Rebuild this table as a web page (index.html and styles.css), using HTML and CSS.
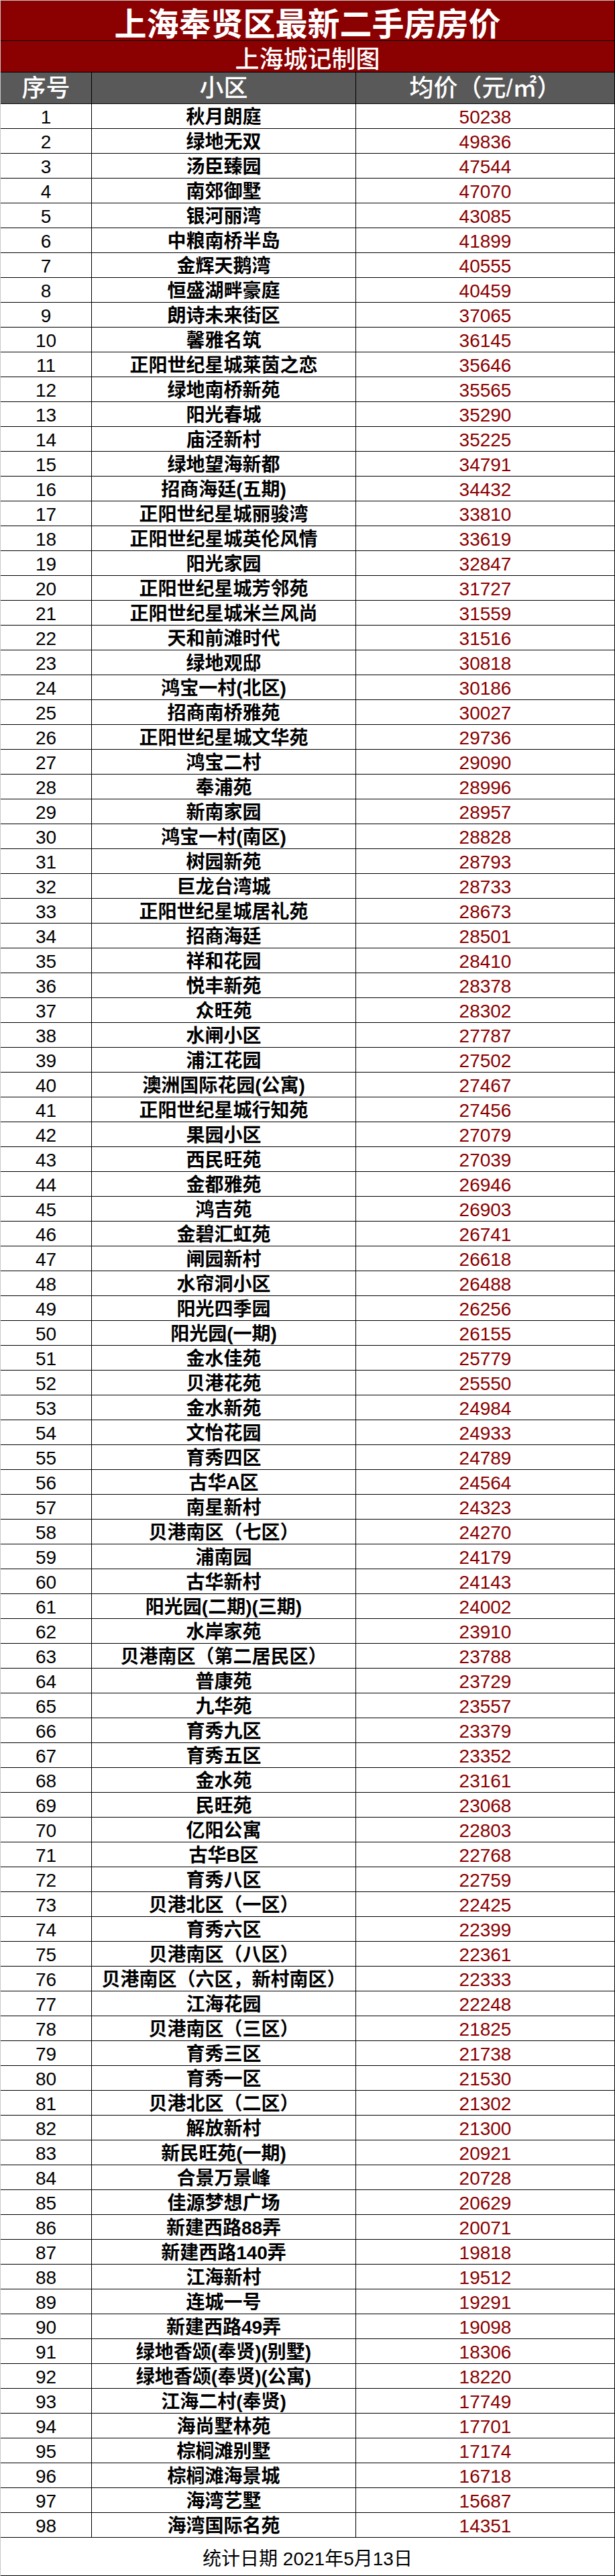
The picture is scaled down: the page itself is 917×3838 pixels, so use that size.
FILE: index.html
```html
<!DOCTYPE html>
<html lang="zh-CN">
<head>
<meta charset="utf-8">
<title>上海奉贤区最新二手房房价</title>
<link rel="stylesheet" href="styles.css">
</head>
<body>
<div class="sheet">
  <div class="title">上海奉贤区最新二手房房价</div>
  <div class="subtitle">上海城记制图</div>
  <div class="row head"><div class="c num">序号</div><div class="c name">小区</div><div class="c price">均价（元/㎡）</div></div>
  <div class="row"><div class="c num">1</div><div class="c name">秋月朗庭</div><div class="c price">50238</div></div>
  <div class="row"><div class="c num">2</div><div class="c name">绿地无双</div><div class="c price">49836</div></div>
  <div class="row"><div class="c num">3</div><div class="c name">汤臣臻园</div><div class="c price">47544</div></div>
  <div class="row"><div class="c num">4</div><div class="c name">南郊御墅</div><div class="c price">47070</div></div>
  <div class="row"><div class="c num">5</div><div class="c name">银河丽湾</div><div class="c price">43085</div></div>
  <div class="row"><div class="c num">6</div><div class="c name">中粮南桥半岛</div><div class="c price">41899</div></div>
  <div class="row"><div class="c num">7</div><div class="c name">金辉天鹅湾</div><div class="c price">40555</div></div>
  <div class="row"><div class="c num">8</div><div class="c name">恒盛湖畔豪庭</div><div class="c price">40459</div></div>
  <div class="row"><div class="c num">9</div><div class="c name">朗诗未来街区</div><div class="c price">37065</div></div>
  <div class="row"><div class="c num">10</div><div class="c name">馨雅名筑</div><div class="c price">36145</div></div>
  <div class="row"><div class="c num">11</div><div class="c name">正阳世纪星城莱茵之恋</div><div class="c price">35646</div></div>
  <div class="row"><div class="c num">12</div><div class="c name">绿地南桥新苑</div><div class="c price">35565</div></div>
  <div class="row"><div class="c num">13</div><div class="c name">阳光春城</div><div class="c price">35290</div></div>
  <div class="row"><div class="c num">14</div><div class="c name">庙泾新村</div><div class="c price">35225</div></div>
  <div class="row"><div class="c num">15</div><div class="c name">绿地望海新都</div><div class="c price">34791</div></div>
  <div class="row"><div class="c num">16</div><div class="c name">招商海廷(五期)</div><div class="c price">34432</div></div>
  <div class="row"><div class="c num">17</div><div class="c name">正阳世纪星城丽骏湾</div><div class="c price">33810</div></div>
  <div class="row"><div class="c num">18</div><div class="c name">正阳世纪星城英伦风情</div><div class="c price">33619</div></div>
  <div class="row"><div class="c num">19</div><div class="c name">阳光家园</div><div class="c price">32847</div></div>
  <div class="row"><div class="c num">20</div><div class="c name">正阳世纪星城芳邻苑</div><div class="c price">31727</div></div>
  <div class="row"><div class="c num">21</div><div class="c name">正阳世纪星城米兰风尚</div><div class="c price">31559</div></div>
  <div class="row"><div class="c num">22</div><div class="c name">天和前滩时代</div><div class="c price">31516</div></div>
  <div class="row"><div class="c num">23</div><div class="c name">绿地观邸</div><div class="c price">30818</div></div>
  <div class="row"><div class="c num">24</div><div class="c name">鸿宝一村(北区)</div><div class="c price">30186</div></div>
  <div class="row"><div class="c num">25</div><div class="c name">招商南桥雅苑</div><div class="c price">30027</div></div>
  <div class="row"><div class="c num">26</div><div class="c name">正阳世纪星城文华苑</div><div class="c price">29736</div></div>
  <div class="row"><div class="c num">27</div><div class="c name">鸿宝二村</div><div class="c price">29090</div></div>
  <div class="row"><div class="c num">28</div><div class="c name">奉浦苑</div><div class="c price">28996</div></div>
  <div class="row"><div class="c num">29</div><div class="c name">新南家园</div><div class="c price">28957</div></div>
  <div class="row"><div class="c num">30</div><div class="c name">鸿宝一村(南区)</div><div class="c price">28828</div></div>
  <div class="row"><div class="c num">31</div><div class="c name">树园新苑</div><div class="c price">28793</div></div>
  <div class="row"><div class="c num">32</div><div class="c name">巨龙台湾城</div><div class="c price">28733</div></div>
  <div class="row"><div class="c num">33</div><div class="c name">正阳世纪星城居礼苑</div><div class="c price">28673</div></div>
  <div class="row"><div class="c num">34</div><div class="c name">招商海廷</div><div class="c price">28501</div></div>
  <div class="row"><div class="c num">35</div><div class="c name">祥和花园</div><div class="c price">28410</div></div>
  <div class="row"><div class="c num">36</div><div class="c name">悦丰新苑</div><div class="c price">28378</div></div>
  <div class="row"><div class="c num">37</div><div class="c name">众旺苑</div><div class="c price">28302</div></div>
  <div class="row"><div class="c num">38</div><div class="c name">水闸小区</div><div class="c price">27787</div></div>
  <div class="row"><div class="c num">39</div><div class="c name">浦江花园</div><div class="c price">27502</div></div>
  <div class="row"><div class="c num">40</div><div class="c name">澳洲国际花园(公寓)</div><div class="c price">27467</div></div>
  <div class="row"><div class="c num">41</div><div class="c name">正阳世纪星城行知苑</div><div class="c price">27456</div></div>
  <div class="row"><div class="c num">42</div><div class="c name">果园小区</div><div class="c price">27079</div></div>
  <div class="row"><div class="c num">43</div><div class="c name">西民旺苑</div><div class="c price">27039</div></div>
  <div class="row"><div class="c num">44</div><div class="c name">金都雅苑</div><div class="c price">26946</div></div>
  <div class="row"><div class="c num">45</div><div class="c name">鸿吉苑</div><div class="c price">26903</div></div>
  <div class="row"><div class="c num">46</div><div class="c name">金碧汇虹苑</div><div class="c price">26741</div></div>
  <div class="row"><div class="c num">47</div><div class="c name">闸园新村</div><div class="c price">26618</div></div>
  <div class="row"><div class="c num">48</div><div class="c name">水帘洞小区</div><div class="c price">26488</div></div>
  <div class="row"><div class="c num">49</div><div class="c name">阳光四季园</div><div class="c price">26256</div></div>
  <div class="row"><div class="c num">50</div><div class="c name">阳光园(一期)</div><div class="c price">26155</div></div>
  <div class="row"><div class="c num">51</div><div class="c name">金水佳苑</div><div class="c price">25779</div></div>
  <div class="row"><div class="c num">52</div><div class="c name">贝港花苑</div><div class="c price">25550</div></div>
  <div class="row"><div class="c num">53</div><div class="c name">金水新苑</div><div class="c price">24984</div></div>
  <div class="row"><div class="c num">54</div><div class="c name">文怡花园</div><div class="c price">24933</div></div>
  <div class="row"><div class="c num">55</div><div class="c name">育秀四区</div><div class="c price">24789</div></div>
  <div class="row"><div class="c num">56</div><div class="c name">古华A区</div><div class="c price">24564</div></div>
  <div class="row"><div class="c num">57</div><div class="c name">南星新村</div><div class="c price">24323</div></div>
  <div class="row"><div class="c num">58</div><div class="c name">贝港南区（七区）</div><div class="c price">24270</div></div>
  <div class="row"><div class="c num">59</div><div class="c name">浦南园</div><div class="c price">24179</div></div>
  <div class="row"><div class="c num">60</div><div class="c name">古华新村</div><div class="c price">24143</div></div>
  <div class="row"><div class="c num">61</div><div class="c name">阳光园(二期)(三期)</div><div class="c price">24002</div></div>
  <div class="row"><div class="c num">62</div><div class="c name">水岸家苑</div><div class="c price">23910</div></div>
  <div class="row"><div class="c num">63</div><div class="c name">贝港南区（第二居民区）</div><div class="c price">23788</div></div>
  <div class="row"><div class="c num">64</div><div class="c name">普康苑</div><div class="c price">23729</div></div>
  <div class="row"><div class="c num">65</div><div class="c name">九华苑</div><div class="c price">23557</div></div>
  <div class="row"><div class="c num">66</div><div class="c name">育秀九区</div><div class="c price">23379</div></div>
  <div class="row"><div class="c num">67</div><div class="c name">育秀五区</div><div class="c price">23352</div></div>
  <div class="row"><div class="c num">68</div><div class="c name">金水苑</div><div class="c price">23161</div></div>
  <div class="row"><div class="c num">69</div><div class="c name">民旺苑</div><div class="c price">23068</div></div>
  <div class="row"><div class="c num">70</div><div class="c name">亿阳公寓</div><div class="c price">22803</div></div>
  <div class="row"><div class="c num">71</div><div class="c name">古华B区</div><div class="c price">22768</div></div>
  <div class="row"><div class="c num">72</div><div class="c name">育秀八区</div><div class="c price">22759</div></div>
  <div class="row"><div class="c num">73</div><div class="c name">贝港北区（一区）</div><div class="c price">22425</div></div>
  <div class="row"><div class="c num">74</div><div class="c name">育秀六区</div><div class="c price">22399</div></div>
  <div class="row"><div class="c num">75</div><div class="c name">贝港南区（八区）</div><div class="c price">22361</div></div>
  <div class="row"><div class="c num">76</div><div class="c name">贝港南区（六区，新村南区）</div><div class="c price">22333</div></div>
  <div class="row"><div class="c num">77</div><div class="c name">江海花园</div><div class="c price">22248</div></div>
  <div class="row"><div class="c num">78</div><div class="c name">贝港南区（三区）</div><div class="c price">21825</div></div>
  <div class="row"><div class="c num">79</div><div class="c name">育秀三区</div><div class="c price">21738</div></div>
  <div class="row"><div class="c num">80</div><div class="c name">育秀一区</div><div class="c price">21530</div></div>
  <div class="row"><div class="c num">81</div><div class="c name">贝港北区（二区）</div><div class="c price">21302</div></div>
  <div class="row"><div class="c num">82</div><div class="c name">解放新村</div><div class="c price">21300</div></div>
  <div class="row"><div class="c num">83</div><div class="c name">新民旺苑(一期)</div><div class="c price">20921</div></div>
  <div class="row"><div class="c num">84</div><div class="c name">合景万景峰</div><div class="c price">20728</div></div>
  <div class="row"><div class="c num">85</div><div class="c name">佳源梦想广场</div><div class="c price">20629</div></div>
  <div class="row"><div class="c num">86</div><div class="c name">新建西路88弄</div><div class="c price">20071</div></div>
  <div class="row"><div class="c num">87</div><div class="c name">新建西路140弄</div><div class="c price">19818</div></div>
  <div class="row"><div class="c num">88</div><div class="c name">江海新村</div><div class="c price">19512</div></div>
  <div class="row"><div class="c num">89</div><div class="c name">连城一号</div><div class="c price">19291</div></div>
  <div class="row"><div class="c num">90</div><div class="c name">新建西路49弄</div><div class="c price">19098</div></div>
  <div class="row"><div class="c num">91</div><div class="c name">绿地香颂(奉贤)(别墅)</div><div class="c price">18306</div></div>
  <div class="row"><div class="c num">92</div><div class="c name">绿地香颂(奉贤)(公寓)</div><div class="c price">18220</div></div>
  <div class="row"><div class="c num">93</div><div class="c name">江海二村(奉贤)</div><div class="c price">17749</div></div>
  <div class="row"><div class="c num">94</div><div class="c name">海尚墅林苑</div><div class="c price">17701</div></div>
  <div class="row"><div class="c num">95</div><div class="c name">棕榈滩别墅</div><div class="c price">17174</div></div>
  <div class="row"><div class="c num">96</div><div class="c name">棕榈滩海景城</div><div class="c price">16718</div></div>
  <div class="row"><div class="c num">97</div><div class="c name">海湾艺墅</div><div class="c price">15687</div></div>
  <div class="row"><div class="c num">98</div><div class="c name">海湾国际名苑</div><div class="c price">14351</div></div>
  <div class="footer">统计日期 2021年5月13日</div>
</div>
</body>
</html>
```

FILE: styles.css
```css
html, body {
  margin: 0;
  padding: 0;
  background: #ffffff;
}

.sheet {
  width: 917px;
  box-sizing: border-box;
  border-top: 1px solid #c8c8c8;
  border-left: 1px solid #c8c8c8;
  border-right: 1px solid #000000;
  font-family: "Liberation Sans", "Noto Sans CJK SC", sans-serif;
  color: #000000;
}

.title {
  height: 60px;
  box-sizing: border-box;
  background: #8b0000;
  color: #ffffff;
  border-bottom: 1px solid #000000;
  display: flex;
  align-items: center;
  justify-content: center;
  font-size: 48px;
  font-weight: 700;
  padding-top: 3px;
}

.subtitle {
  height: 47px;
  box-sizing: border-box;
  background: #8b0000;
  color: #ffffff;
  border-bottom: 1px solid #000000;
  display: flex;
  align-items: center;
  justify-content: center;
  font-size: 36px;
  font-weight: 500;
  padding-top: 2px;
}

.row {
  display: grid;
  grid-template-columns: 136px 394px 1fr;
  height: 37px;
  box-sizing: border-box;
  border-bottom: 1px solid #000000;
}

.c {
  display: flex;
  align-items: center;
  justify-content: center;
  box-sizing: border-box;
  white-space: nowrap;
  font-size: 28px;
  line-height: 1;
  padding-top: 3px;
}

.num,
.name {
  border-right: 1px solid #000000;
}

.name {
  font-weight: 700;
}

.price {
  color: #8b0000;
}

.head {
  height: 47px;
  background: #595959;
}

.head .c {
  color: #ffffff;
  font-size: 36px;
  font-weight: 500;
  padding-top: 2px;
}

.footer {
  height: 57px;
  box-sizing: border-box;
  border-bottom: 1px solid #000000;
  display: flex;
  align-items: center;
  justify-content: center;
  font-size: 28px;
  padding-top: 2px;
}
```
